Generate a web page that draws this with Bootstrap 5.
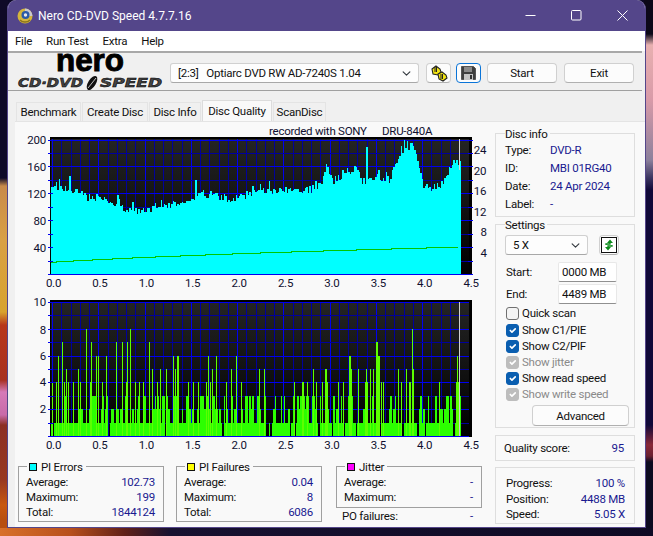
<!DOCTYPE html>
<html lang="en"><head><meta charset="utf-8"><title>Nero CD-DVD Speed</title>
<link href="https://cdn.jsdelivr.net/npm/bootstrap@5.3.0/dist/css/bootstrap.min.css" rel="stylesheet">
<style>
html,body{width:653px;height:536px;overflow:hidden}
body{margin:0;font:11.5px/16px Roboto,"Noto Sans",sans-serif;letter-spacing:-.25px;color:#111;background-color:#0c0826;
background-image:
linear-gradient(180deg,#0f0a28 0,#0f0a28 178px,#c98a4a 186px,#d9a045 240px,#d8a32e 312px,#b8361a 325px,#a83020 380px,#d67ab8 392px,#c86aa8 415px,#8c3024 425px,#983820 480px,#c8580f 505px,#b84f10 520px),
linear-gradient(180deg,#0c0818 0,#0c0818 34px,#e8b0b0 45px,#d89aa8 100px,#8c809c 160px,#3a3460 178px,#100838 190px,#100838 425px,#8a2838 445px,#6a2030 456px,#0c0a20 462px),
linear-gradient(90deg,#d8702a 0,#b8501c 70px,#602018 125px,#171130 170px,#0e0a24 100%);
background-repeat:no-repeat;background-size:8px 528px,9px 528px,100% 9px;background-position:0 0,100% 0,0 100%}
select,input,button,.nav-link{letter-spacing:-.25px}
.wnd{margin-left:7px;width:639px;height:528px;border:1px solid #54468a;border-top:0;border-radius:9px 9px 0 0;overflow:hidden;background:#f0f0f0}
.ttl{height:31px;background:#54468a;color:#fff;padding-left:9px;font-size:12px;letter-spacing:0}
.ttl-ic{margin-right:5px}
.ctl{width:46px;height:31px;display:flex;align-items:center;justify-content:center}
.mnu{height:20px;background:#fff;padding-left:7px}
.mnu span{margin-right:14px}
.tbar{height:40px;border-top:2px solid #a8a8a8;border-bottom:1px solid #a0a0a0;margin-right:3px;background:#f0f0f0;padding-top:10px;position:relative;box-shadow:0 -1px 0 #fff}
.logo{width:162px;margin-top:-9px;margin-left:1px;flex:none;overflow:visible}
.sel{font-size:11.5px;line-height:16px;height:20px;padding:1px 24px 1px 7px;border:1px solid #d0d0d0;border-bottom-color:#a8a8a8;border-radius:3px;background-color:#fdfdfd;color:#111;background-size:11px 9px;background-position:right 6px center}
.sel-drv{width:249px;margin-left:-1px}
.bt{height:20px;font-size:11.5px;line-height:16px;padding:1px 0;border:1px solid #d0d0d0;border-bottom-color:#b0b0b0;border-radius:4px;background:#fcfcfc;color:#111;display:flex;align-items:center;justify-content:center}
.bt-ic{width:25px;margin-left:7px}
.bt-sv{width:25px;margin-left:5px;border:1.5px solid #0a74d8}
.bt-st{width:70px;margin-left:6px}
.bt-ex{width:70px;margin-left:7px}
.tabsrow{height:30px;padding:11px 0 0 8px;border:0;flex-wrap:nowrap}
.tabsrow .nav-link{height:19px;padding:0;text-align:center;font-size:11.5px;line-height:18px;color:#111;border:1px solid #e4e4e4;border-bottom:0;border-radius:0;background:#f0f0f0;margin:0 1px 0 0;white-space:nowrap}
.tabsrow .nav-link.active{height:21px;margin-top:-2px;background:#f9f9f9;color:#111;padding-top:1px;border-color:#dcdcdc}
.tb-a{width:65px}.tb-b{width:66px}.tb-c{width:52px}.tb-d{width:70px}.tb-e{width:53px}
.pnl{height:406px;margin-left:7px;background:#f9f9f9;border-top:1px solid #e4e4e4}
.lft{width:475px;flex:none}
.plot{display:block;width:475px}
.plot text{font:11.5px Roboto,"Noto Sans",sans-serif;letter-spacing:-.25px;fill:#101030}
.lgnds{margin-top:10px;padding-left:3px}
.gb{border:1px solid #a0a0a0;height:56px;padding:10px 8px 0 7px;line-height:15px}
.gb-a{width:146px;margin-right:12px}
.gb-j{width:146px;height:42px;margin-left:2px}
.gb-t{display:flex;width:fit-content;align-items:center;background:#f9f9f9;margin:-18px 0 0 1px;padding:0 3px 0 2px;height:16px;position:relative;line-height:16px}
.gb-sw{width:8px;height:8px;border:1px solid #111;margin-right:4px}
.row-v{display:flex;justify-content:space-between}
.vl{color:#1a1a90}
.po{padding:0 9px 0 8px}
.rgt{width:140px;margin-left:5px;padding-top:11px}
.bx{border:1px solid #dedede;padding:0 9px;position:relative}
.bx-i{height:84px;margin-bottom:7px}
.bx-s{height:204px;margin-bottom:7px}
.bx-q{height:26px;margin-bottom:6px;display:flex;justify-content:space-between;align-items:center;padding:0 10px 0 8px}
.bx-p{height:57px;padding:8px 9px 0 10px;line-height:15.5px}
.bx-h{background:#f9f9f9;display:block;width:fit-content;padding:0 2px 0 0;margin:-8px 0 -1px 0;position:relative;line-height:16px;height:16px}
.i-r{display:flex;height:18px;line-height:18px}
.i-r b{font-weight:400;width:45px}
.i-r i{font-style:normal;color:#1a1a90}
.sp-r{margin-top:3px}
.sel-sp{width:83px}
.bt-rf{width:20px;margin-left:11px;height:20px;flex:none}
.spn{display:flex;align-items:center;justify-content:space-between;height:20px;margin-top:2px;padding-left:1px;padding-right:8px}
.spn-a{margin-top:7px}
.fld{width:59px;height:20px;font-size:11.5px;line-height:16px;padding:1px 3px;border:1px solid #e8e8e8;border-bottom:1px solid #909090;border-radius:2px;background:#fff;color:#111}
.ck{display:flex;align-items:center;margin:0;padding:0;height:16px;min-height:0}
.ck-q{margin:1px 0 1px}
.ck .form-check-input{float:none;margin:0 3px 0 1px;width:13px;height:13px;border-radius:3px;border:1px solid #707070;background-color:#f4f4f4;flex:none}
.ck .form-check-input:checked{background-color:#0a5eb0;border-color:#0a5eb0}
.ck .form-check-input:disabled{opacity:1;background-color:#bdbdbd;border-color:#bdbdbd;background-image:url("data:image/svg+xml,%3csvg xmlns='http://www.w3.org/2000/svg' viewBox='0 0 20 20'%3e%3cpath fill='none' stroke='%23fff' stroke-linecap='round' stroke-linejoin='round' stroke-width='3' d='m6 10 3 3 6-6'/%3e%3c/svg%3e")}
.ck .form-check-label{opacity:1;line-height:16px}
.ck .form-check-input:disabled~.form-check-label{opacity:1;color:#8a8a8a}
.bt-ad{width:97px;height:21px;margin:3px 0 0 27px}
</style></head><body>
<div class="wnd">
 <div class="ttl d-flex align-items-center">
  <svg class="ttl-ic" width="16" height="16" viewBox="0 0 16 16"><circle cx="8" cy="8" r="7.5" fill="#d4b53c"/><path d="M8 .5A7.5 7.5 0 0 1 15.5 8H8z" fill="#c8c8d0"/><circle cx="8.5" cy="7" r="4" fill="#2a5aa8"/><circle cx="8.5" cy="7" r="1.7" fill="#e8e8e8"/><path d="M3 12a7 7 0 0 0 10 0" fill="none" stroke="#8a7420" stroke-width="1.5"/></svg>
  <span class="flex-grow-1">Nero CD-DVD Speed 4.7.7.16</span>
  <div class="ctl"><svg width="11" height="11" viewBox="0 0 11 11"><path d="M.5 5.5h10" stroke="#fff"/></svg></div>
  <div class="ctl"><svg width="11" height="11" viewBox="0 0 11 11"><rect x=".5" y=".5" width="9.5" height="9.5" rx="1" fill="none" stroke="#fff"/></svg></div>
  <div class="ctl"><svg width="11" height="11" viewBox="0 0 11 11"><path d="M.5.5l10 10M10.500.5l-10 10" stroke="#fff"/></svg></div>
 </div>
 <div class="mnu d-flex align-items-center"><span>File</span><span>Run Test</span><span>Extra</span><span>Help</span></div>
 <div class="tbar d-flex">
  <svg class="logo" width="162" height="38" viewBox="0 0 162 38">
   <text x="47" y="16.500" font-family="'Liberation Sans',sans-serif" font-weight="700" font-size="32" letter-spacing="0" textLength="68" lengthAdjust="spacingAndGlyphs" stroke="#000" stroke-width="1">nero</text>
   <text x="9" y="33" font-family="'DejaVu Sans',sans-serif" font-weight="700" font-style="oblique" font-size="12.500" letter-spacing="0" textLength="65" lengthAdjust="spacingAndGlyphs" fill="#444" stroke="#000" stroke-width=".5">CD·DVD</text>
   <ellipse cx="83" cy="29" rx="3.800" ry="8" transform="rotate(32 83 29)" fill="#111"/><path d="M79 34l8-10" stroke="#eee" stroke-width=".8"/>
   <text x="91" y="33" font-family="'DejaVu Sans',sans-serif" font-weight="700" font-style="oblique" font-size="12.500" letter-spacing="0" textLength="62" lengthAdjust="spacingAndGlyphs" fill="#444" stroke="#000" stroke-width=".5">SPEED</text>
  </svg>
  <select class="form-select sel sel-drv" aria-label="Drive"><option>[2:3]&nbsp;&nbsp;&nbsp;Optiarc DVD RW AD-7240S 1.04</option></select>
  <button class="btn bt bt-ic" aria-label="Disc info"><svg width="18" height="17" viewBox="0 0 18 17"><g fill="#f2e312" stroke="#222" stroke-width="1.100"><path d="M2 4l4-3 4 3 1 3-3 3-5-1z"/><path d="M8 9l4-2 4 3 1 3-4 3-4-2z"/></g><path d="M5 2v5M6.500 2v5M11 9v5M12.500 9v5" stroke="#222"/></svg></button>
  <button class="btn bt bt-sv" aria-label="Save"><svg width="15" height="14" viewBox="0 0 15 14"><path d="M.5.500h12l2 2v11H.5z" fill="#3e3e3e" stroke="#555"/><rect x="3" y="1" width="8" height="5" fill="#8a8a8a"/><rect x="3" y="8" width="9" height="6" fill="#c4c4c4"/><rect x="9" y="9" width="2" height="4" fill="#333"/></svg></button>
  <button class="btn bt bt-st">Start</button>
  <button class="btn bt bt-ex">Exit</button>
 </div>
 <ul class="nav nav-tabs tabsrow">
  <li class="nav-item"><a class="nav-link tb-a" href="#">Benchmark</a></li>
  <li class="nav-item"><a class="nav-link tb-b" href="#">Create Disc</a></li>
  <li class="nav-item"><a class="nav-link tb-c" href="#">Disc Info</a></li>
  <li class="nav-item"><a class="nav-link active tb-d" href="#">Disc Quality</a></li>
  <li class="nav-item"><a class="nav-link tb-e" href="#">ScanDisc</a></li>
 </ul>
 <div class="pnl d-flex">
  <div class="lft">
   <svg id="c1" class="plot" height="168" viewBox="15 122 475 168"></svg>
   <svg id="c2" class="plot" height="166" viewBox="15 290 475 166"></svg>
   <div class="lgnds d-flex">
    <div class="gb gb-a"><div class="gb-t"><span class="gb-sw" style="background:#0ff"></span>PI Errors</div>
     <div class="row-v"><span>Average:</span><span class="vl">102.73</span></div><div class="row-v"><span>Maximum:</span><span class="vl">199</span></div><div class="row-v"><span>Total:</span><span class="vl">1844124</span></div></div>
    <div class="gb gb-a"><div class="gb-t"><span class="gb-sw" style="background:#ff0"></span>PI Failures</div>
     <div class="row-v"><span>Average:</span><span class="vl">0.04</span></div><div class="row-v"><span>Maximum:</span><span class="vl">8</span></div><div class="row-v"><span>Total:</span><span class="vl">6086</span></div></div>
    <div>
     <div class="gb gb-j"><div class="gb-t"><span class="gb-sw" style="background:#f0f"></span>Jitter</div>
      <div class="row-v"><span>Average:</span><span class="vl">-</span></div><div class="row-v"><span>Maximum:</span><span class="vl">-</span></div></div>
     <div class="row-v po"><span>PO failures:</span><span class="vl">-</span></div>
    </div>
   </div>
  </div>
  <div class="rgt">
   <div class="bx bx-i"><div class="bx-h">Disc info</div>
    <div class="i-r"><b>Type:</b><i>DVD-R</i></div><div class="i-r"><b>ID:</b><i>MBI 01RG40</i></div><div class="i-r"><b>Date:</b><i>24 Apr 2024</i></div><div class="i-r"><b>Label:</b><i>-</i></div>
   </div>
   <div class="bx bx-s"><div class="bx-h">Settings</div>
    <div class="d-flex sp-r"><select class="form-select sel sel-sp" aria-label="Speed"><option>5 X</option></select>
     <button class="btn bt bt-rf" aria-label="Refresh"><svg width="16" height="16" viewBox="0 0 16 16"><rect x=".5" y=".5" width="15" height="15" fill="#fff" stroke="#111"/><path d="M9 2.500l3 3.500H6z" fill="#0a8a1a"/><path d="M7 13.500L4 10h6z" fill="#0a8a1a"/><path d="M9 6v1H5v1M7 10V9h4V8" fill="none" stroke="#0a8a1a" stroke-width="1.300"/></svg></button></div>
    <div class="spn spn-a"><span>Start:</span><input class="form-control fld" value="0000 MB" aria-label="Start"></div>
    <div class="spn"><span>End:</span><input class="form-control fld" value="4489 MB" aria-label="End"></div>
    <div class="form-check ck ck-q"><input class="form-check-input" type="checkbox" id="k1"><label class="form-check-label" for="k1">Quick scan</label></div>
    <div class="form-check ck"><input class="form-check-input" type="checkbox" checked id="k2"><label class="form-check-label" for="k2">Show C1/PIE</label></div>
    <div class="form-check ck"><input class="form-check-input" type="checkbox" checked id="k3"><label class="form-check-label" for="k3">Show C2/PIF</label></div>
    <div class="form-check ck"><input class="form-check-input" type="checkbox" checked disabled id="k4"><label class="form-check-label" for="k4">Show jitter</label></div>
    <div class="form-check ck"><input class="form-check-input" type="checkbox" checked id="k5"><label class="form-check-label" for="k5">Show read speed</label></div>
    <div class="form-check ck"><input class="form-check-input" type="checkbox" checked disabled id="k6"><label class="form-check-label" for="k6">Show write speed</label></div>
    <button class="btn bt bt-ad">Advanced</button>
   </div>
   <div class="bx bx-q"><span>Quality score:</span><span class="vl">95</span></div>
   <div class="bx bx-p">
    <div class="row-v"><span>Progress:</span><span class="vl">100 %</span></div><div class="row-v"><span>Position:</span><span class="vl">4488 MB</span></div><div class="row-v"><span>Speed:</span><span class="vl">5.05 X</span></div>
   </div>
  </div>
 </div>
</div>
<script>
(function(){
var L=50,R=472,X0=52,XU=92.5;
function rnd(i){var s=Math.sin(i*127.1+11.7)*43758.5453;return s-Math.floor(s)}
function frame(top,bot,labels,id,gy){
 var o='<defs><linearGradient id="'+id+'" x1="0" y1="0" x2="0" y2="1"><stop offset="0" stop-color="#242424"/><stop offset="1" stop-color="#000"/></linearGradient></defs>';
 o+='<rect x="'+L+'" y="'+(top-2)+'" width="'+(R-L)+'" height="'+(bot-top+3)+'" fill="#000"/>';
 o+='<rect x="'+(L+1)+'" y="'+top+'" width="'+(R-L-4)+'" height="'+(bot-top)+'" fill="url(#'+id+')"/>';
 var v,x;
 for(v=0;v<=44;v++){x=Math.round(X0+v*XU/10)+.5;if(x>468.5)break;o+='<path d="M'+x+' '+top+'V'+bot+'" stroke="'+(v%5?'#00009c':'#0000f0')+'" />'}
 for(v=0;v<gy.length;v++){o+='<path d="M'+(L+1)+' '+gy[v][0]+'H469" stroke="'+(gy[v][1]?'#0000f0':'#00009c')+'"/>'}
 return o}
function axisX(y){var o='',i,a=['0.0','0.5','1.0','1.5','2.0','2.5','3.0','3.5','4.0','4.5'];for(i=0;i<10;i++)o+='<text x="'+(53.5+i*46.4)+'" y="'+y+'" text-anchor="middle">'+a[i]+'</text>';return o}
/* chart 1 */
var env=[[51,185],[60,186],[75,190],[85,197],[100,197],[115,207],[145,212],[165,205],[180,203],[195,195],[215,195],[232,200],[250,193],[283,190],[310,190],[320,183],[326,165],[332,182],[345,172],[355,168],[362,182],[375,177],[390,180],[394,162],[400,155],[405,145],[415,148],[418,170],[424,190],[430,187],[440,187],[445,178],[450,167],[456,160],[460,165]];
function ev(x){for(var i=1;i<env.length;i++)if(x<=env[i][0]){var a=env[i-1],b=env[i];return a[1]+(b[1]-a[1])*(x-a[0])/(b[0]-a[0])}return 165}
var gy1=[],k;for(k=0;k<=10;k++)gy1.push([Math.round(274-k*13.45)+.5,k%2==0]);
var s=frame(139,274,0,'g1',gy1);
var d='M51 274',x=51,i=0,y;var sp={62:172,69:176,195:180,117:195,366:147,403:140,406:141,395:155,224:186,268:181};
for(;x<460;x+=1.5,i++){y=ev(x)+(rnd(i)-.5)*8;if(rnd(i+500)>.92)y-=5;var rx=Math.floor(x);if(sp[rx]&&x-rx<1)y=sp[rx];d+='V'+Math.round(y)+'H'+(x+1.5)}
d+='V274Z';
s+='<path d="'+d+'" fill="#0ff" shape-rendering="crispEdges"/>';
var st=[[51,262],[56,261],[73,260],[92,259],[112,258],[132,257],[155,256],[180,255],[205,254],[232,253],[260,252],[291,251],[323,250],[356,249],[391,248],[426,247]];
var gl='M'+st[0][0]+' '+(st[0][1]+.5);for(k=1;k<st.length;k++)gl+='H'+st[k][0]+'V'+(st[k][1]+.5);gl+='H458';
s+='<path d="'+gl+'" fill="none" stroke="#00c800" stroke-width="1" shape-rendering="crispEdges"/>';
s+='<path d="M459.500 139V170" stroke="#d8d8d8"/>';
for(k=0;k<=10;k++){var ty=Math.round(274-k*13.45)+.5;s+='<path d="M48 '+ty+'H53" stroke="#0000f0"/><path d="M468 '+ty+'H473" stroke="#0000f0"/>'}
[[200,143.500],[160,171],[120,198],[80,225],[40,251.500]].forEach(function(a){s+='<text x="46" y="'+a[1]+'" text-anchor="end">'+a[0]+'</text>'});
[[24,153.500],[20,174.500],[16,195],[12,215.500],[8,236],[4,256.500]].forEach(function(a){s+='<text x="'+(a[0]>=10?480:483.500)+'" y="'+a[1]+'" text-anchor="middle">'+a[0]+'</text>'});
s+=axisX(287);
s+='<text x="269" y="135">recorded with SONY</text><text x="382" y="135">DRU-840A</text>';
document.getElementById('c1').innerHTML=s;
/* chart 2 */
var gy2=[];for(k=0;k<=10;k++)gy2.push([Math.round(436-k*13.4)+.5,k%2==0]);
s=frame(302,436,0,'g2',gy2);
var U=13.4,b='';
for(x=51,i=0;x<460;x+=1.5,i++){
 var w=Math.sin(x*.13)+Math.sin(x*.041+1)*.7, r=rnd(i*3+7), q=rnd(i*7+40), lv=1;
 if(rnd(i*5+3)>.92)lv=0;else if(q>.52+(w<0?.12:-.12))lv=(r>.45)?3:2;
 if(lv)b+='M'+x.toFixed(1)+' 436V'+(436-lv*U).toFixed(1)+'h1.5V436z';
}
s+='<path d="'+b+'" fill="#2cff00" shape-rendering="crispEdges"/>';
var sp2=[[157,4],[175,6],[187,7],[199,5],[235,5],[259,8],[274,7],[289,6],[295,6],[319,6],[349,7],[367,7],[382,7],[391,8],[448,7],[457,5],[481,5],[499,5],[520,6],[526,5],[532,6],[535,6],[625,6],[637,5],[649,6],[694,5],[709,6],[169,4],[193,4],[205,4],[220,4],[241,4],[271,4],[307,4],[379,4],[406,4],[418,4],[430,4],[472,4],[565,4],[580,4],[595,4],[619,4],[631,4],[679,4],[724,4]];
var sp3=[[28,5],[43,5],[190,5],[226,5],[229,5],[298,6],[301,6],[304,5],[325,5],[349,5],[361,5],[370,5],[379,7],[382,7],[385,6],[388,6],[445,5],[469,5],[487,8],[490,5],[622,6],[133,4],[157,4],[160,4],[172,4],[199,4],[217,4],[232,4],[265,4],[280,4],[346,4],[352,4],[394,4],[400,4],[454,4],[478,4],[481,4],[568,4],[619,4],[625,4]];
var sb='';
sp2.forEach(function(a){sb+='M'+Math.round(a[0]/3)+' 436V'+(436-a[1]*U).toFixed(1)+'h1V436z'});
sp3.forEach(function(a){sb+='M'+Math.round(250+a[0]/3)+' 436V'+(436-a[1]*U).toFixed(1)+'h1V436z'});
s+='<path d="'+sb+'" fill="#5cff00" shape-rendering="crispEdges"/>';
s+='<path d="M459.500 302V436" stroke="#cfcfcf"/>';
for(k=0;k<=10;k++){var t2=Math.round(436-k*13.4)+.5;s+='<path d="M48 '+t2+'H53" stroke="#0000f0"/>'}
[[10,306],[8,333.500],[6,360],[4,386],[2,413]].forEach(function(a){s+='<text x="46" y="'+a[1]+'" text-anchor="end">'+a[0]+'</text>'});
s+=axisX(449);
document.getElementById('c2').innerHTML=s;
})();
</script>
<script src="https://cdn.jsdelivr.net/npm/bootstrap@5.3.0/dist/js/bootstrap.bundle.min.js"></script>
</body></html>
